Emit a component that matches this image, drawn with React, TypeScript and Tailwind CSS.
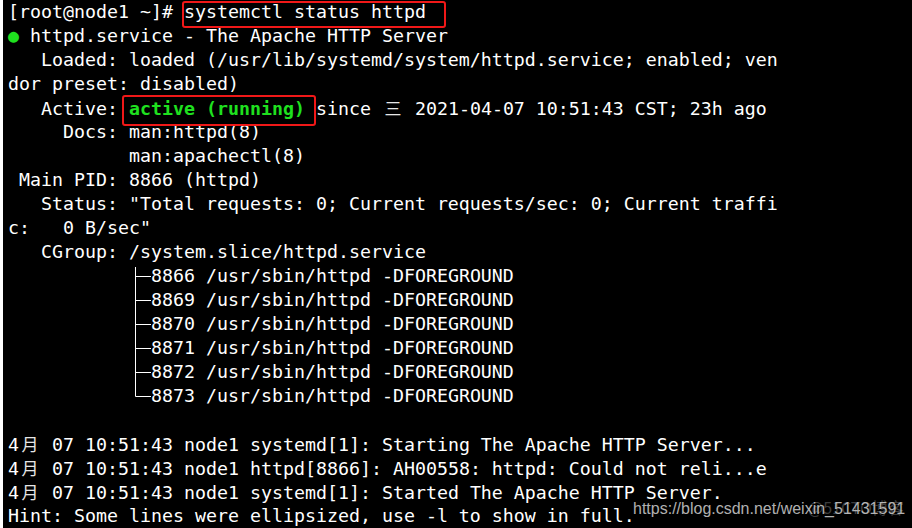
import React from 'react';

const mono = "font-['DejaVu_Sans_Mono','Liberation_Mono',monospace]";

// double-width CJK glyph, kept on the 11px terminal grid
function Wide({ ch }: { ch: string }) {
  return (
    <span className="inline-block w-[22px] text-center font-['Noto_Sans_CJK_SC',sans-serif] text-[17px] text-[#e6e6e6]">
      {ch}
    </span>
  );
}

function Branch({ last, first }: { last?: boolean; first?: boolean }) {
  return (
    <svg width="22" height="24" className="inline-block align-top" viewBox="0 0 22 24">
      <line x1="6.5" y1={first ? 3 : 0} x2="6.5" y2={last ? 12.5 : 24} stroke="#ffffff" strokeWidth="1" />
      <line x1="6.5" y1="12.5" x2="22" y2="12.5" stroke="#ffffff" strokeWidth="1" />
    </svg>
  );
}

function Line({ children }: { children?: React.ReactNode }) {
  return <div className="h-[24px] leading-[24px] whitespace-pre">{children}</div>;
}

const pids = ['8866', '8869', '8870', '8871', '8872', '8873'];

export default function App() {
  return (
    <div
      className={`relative w-[912px] h-[528px] overflow-hidden bg-black border-l-[3px] border-white pl-[5px] text-white text-[18.27px] ${mono}`}
    >
      <Line>[root@node1 ~]# systemctl status httpd</Line>
      <Line>
        <span className="text-[#1fe01f]">●</span> httpd.service - The Apache HTTP Server
      </Line>
      <Line>   Loaded: loaded (/usr/lib/systemd/system/httpd.service; enabled; ven</Line>
      <Line>dor preset: disabled)</Line>
      <Line>
        {'   Active: '}
        <span className="font-bold text-[#1fe01f]">active (running)</span>
        {' since '}
        <Wide ch="三" />
        {' 2021-04-07 10:51:43 CST; 23h ago'}
      </Line>
      <Line>     Docs: man:httpd(8)</Line>
      <Line>           man:apachectl(8)</Line>
      <Line> Main PID: 8866 (httpd)</Line>
      <Line>   Status: "Total requests: 0; Current requests/sec: 0; Current traffi</Line>
      <Line>c:   0 B/sec"</Line>
      <Line>   CGroup: /system.slice/httpd.service</Line>
      {pids.map((pid, i) => (
        <Line key={pid}>
          {'           '}
          <Branch first={i === 0} last={i === pids.length - 1} />
          {`${pid} /usr/sbin/httpd -DFOREGROUND`}
        </Line>
      ))}
      <Line />
      <Line>
        4<Wide ch="月" />
        {' 07 10:51:43 node1 systemd[1]: Starting The Apache HTTP Server...'}
      </Line>
      <Line>
        4<Wide ch="月" />
        {' 07 10:51:43 node1 httpd[8866]: AH00558: httpd: Could not reli...e'}
      </Line>
      <Line>
        4<Wide ch="月" />
        {' 07 10:51:43 node1 systemd[1]: Started The Apache HTTP Server.'}
      </Line>
      <Line>Hint: Some lines were ellipsized, use -l to show in full.</Line>

      {/* red annotation boxes */}
      <div className="absolute left-[179px] top-[1px] w-[264px] h-[27px] border-2 border-[#f01818] rounded-[3px]" />
      <div className="absolute left-[119px] top-[95px] w-[194px] h-[31px] border-2 border-[#f01818] rounded-[3px]" />

      {/* watermark */}
      <div className="absolute left-[805px] top-[499px] font-['Noto_Sans_CJK_SC',sans-serif] text-[16px] leading-none text-[#9a9a9a] opacity-40">
        @51CTO博客
      </div>
      <div className="absolute left-[630px] top-[501px] font-['Liberation_Sans',sans-serif] text-[16px] leading-none text-[#c4c4c4] opacity-90">
        https://blog.csdn.net/weixin_51431591
      </div>
    </div>
  );
}
